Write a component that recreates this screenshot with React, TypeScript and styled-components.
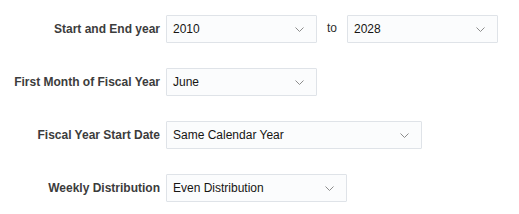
import * as React from 'react';
import styled, { createGlobalStyle } from 'styled-components';

const GlobalStyle = createGlobalStyle`
  body {
    margin: 0;
    background: #ffffff;
    font-family: "Liberation Sans", Arial, sans-serif;
  }
`;

const Form = styled.div`
  display: grid;
  grid-template-columns: 160px auto;
  column-gap: 6px;
  row-gap: 25px;
  padding-top: 15px;
  align-items: center;
`;

const Label = styled.label`
  text-align: right;
  font-size: 12px;
  font-weight: bold;
  color: #3c3c3c;
  white-space: nowrap;
`;

const Controls = styled.div`
  display: flex;
  align-items: center;
`;

const SelectBox = styled.div<{ $width: number }>`
  box-sizing: border-box;
  width: ${(p) => p.$width}px;
  height: 28px;
  display: flex;
  align-items: center;
  justify-content: space-between;
  padding: 0 11px 0 6px;
  background: #fbfcfd;
  border: 1px solid #dfe3e8;
  border-radius: 1px;
  font-size: 12px;
  color: #161513;
`;

const Separator = styled.span`
  font-size: 12px;
  color: #2e2e2e;
  margin: 0 10px 0 10px;
  padding-bottom: 2px;
`;

const Chevron = () => (
  <svg width="11" height="7" viewBox="0 0 11 7">
    <path d="M1.5 1.5 L5.5 5.5 L9.5 1.5" fill="none" stroke="#8c8c8c" strokeWidth="1" />
  </svg>
);

const Select = ({ value, width }: { value: string; width: number }) => (
  <SelectBox $width={width}>
    <span>{value}</span>
    <Chevron />
  </SelectBox>
);

export default function App() {
  return (
    <>
      <GlobalStyle />
      <Form>
        <Label>Start and End year</Label>
        <Controls>
          <Select value="2010" width={151} />
          <Separator>to</Separator>
          <Select value="2028" width={151} />
        </Controls>

        <Label>First Month of Fiscal Year</Label>
        <Controls>
          <Select value="June" width={151} />
        </Controls>

        <Label>Fiscal Year Start Date</Label>
        <Controls>
          <Select value="Same Calendar Year" width={256} />
        </Controls>

        <Label>Weekly Distribution</Label>
        <Controls>
          <Select value="Even Distribution" width={181} />
        </Controls>
      </Form>
    </>
  );
}
